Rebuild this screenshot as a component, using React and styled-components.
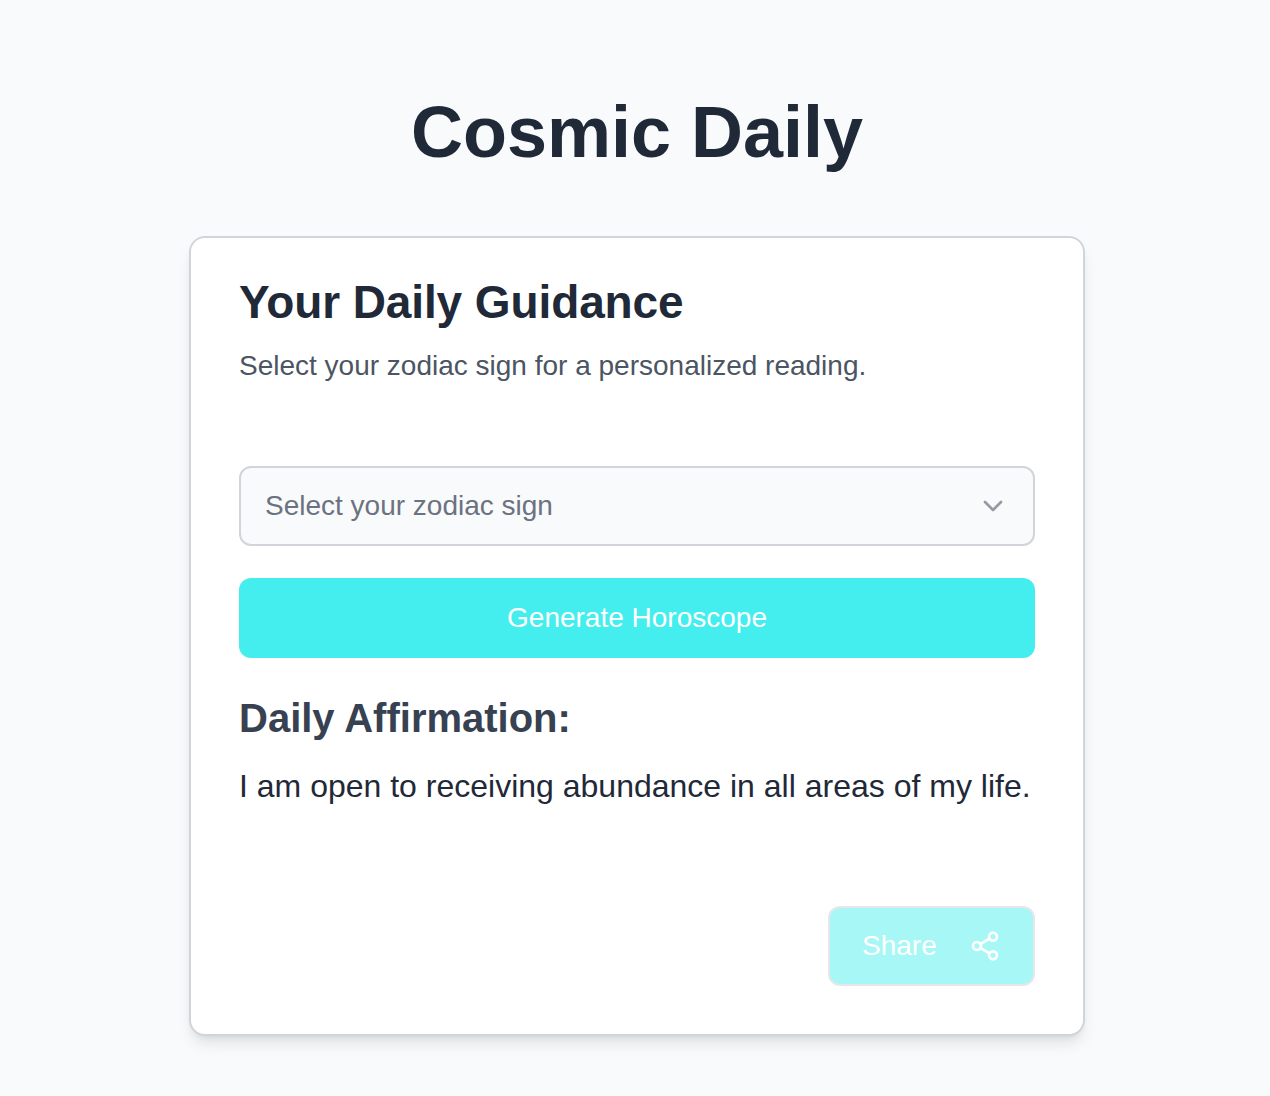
import React from 'react';
import styled, { createGlobalStyle } from 'styled-components';
import { ChevronDown, Share2 } from 'lucide-react';

const GlobalStyle = createGlobalStyle`
  * { box-sizing: border-box; }
  body { margin: 0; background: #f9fafb; font-family: "Liberation Sans", Arial, sans-serif; }
`;

const Page = styled.main`
  min-height: 1096px; padding: 92px 185px 0 189px;
  display: flex; flex-direction: column; align-items: center;
`;
const Title = styled.h1`
  margin: 0 0 64px; font-size: 72px; line-height: 80px; font-weight: 700; color: #1f2937;
`;
const Card = styled.section`
  width: 896px; height: 800px; padding: 36px 48px 48px; background: #fff;
  border: 2px solid #d1d5db; border-radius: 16px;
  box-shadow: 0 10px 15px -3px rgba(0,0,0,0.1), 0 4px 6px -4px rgba(0,0,0,0.1);
  display: flex; flex-direction: column;
`;
const Heading = styled.h2`
  margin: 0; font-size: 46px; line-height: 56px; font-weight: 700; color: #1f2937; letter-spacing: -0.1px;
`;
const Subtitle = styled.p`
  margin: 16px 0 0; font-size: 28px; line-height: 40px; color: #4b5563;
`;
const SelectBox = styled.div`
  margin-top: 80px; height: 80px; padding: 0 24px; background: #f9fafb;
  border: 2px solid #d1d5db; border-radius: 12px;
  display: flex; align-items: center; justify-content: space-between;
  font-size: 28px; color: #6b7280;
  svg { color: #6b7280; opacity: 0.7; }
`;
const GenerateButton = styled.button`
  margin-top: 32px; height: 80px; width: 100%; border: 0; border-radius: 12px;
  background: #45eeee; color: #fff; font: inherit; font-size: 28px;
`;
const AffirmationTitle = styled.h3`
  margin: 38px 0 0; font-size: 40px; line-height: 44px; font-weight: 700; color: #374151;
`;
const AffirmationText = styled.p`
  margin: 24px 0 0; font-size: 32px; line-height: 44px; color: #1f2937; white-space: nowrap;
`;
const Footer = styled.div`
  margin-top: auto; display: flex; justify-content: flex-end;
`;
const ShareButton = styled.button`
  width: 207px; height: 80px; padding: 0 32px; background: #a7f7f7;
  border: 2px solid #e5e7eb; border-radius: 12px; color: #fff; font: inherit; font-size: 28px;
  display: flex; align-items: center; justify-content: space-between;
`;

const App = () => (
  <Page>
    <GlobalStyle />
    <Title>Cosmic Daily</Title>
    <Card>
      <Heading>Your Daily Guidance</Heading>
      <Subtitle>Select your zodiac sign for a personalized reading.</Subtitle>
      <SelectBox>
        Select your zodiac sign
        <ChevronDown size={32} strokeWidth={2} />
      </SelectBox>
      <GenerateButton>Generate Horoscope</GenerateButton>
      <AffirmationTitle>Daily Affirmation:</AffirmationTitle>
      <AffirmationText>I am open to receiving abundance in all areas of my life.</AffirmationText>
      <Footer>
        <ShareButton>
          Share
          <Share2 size={32} strokeWidth={2} />
        </ShareButton>
      </Footer>
    </Card>
  </Page>
);

export default App;
